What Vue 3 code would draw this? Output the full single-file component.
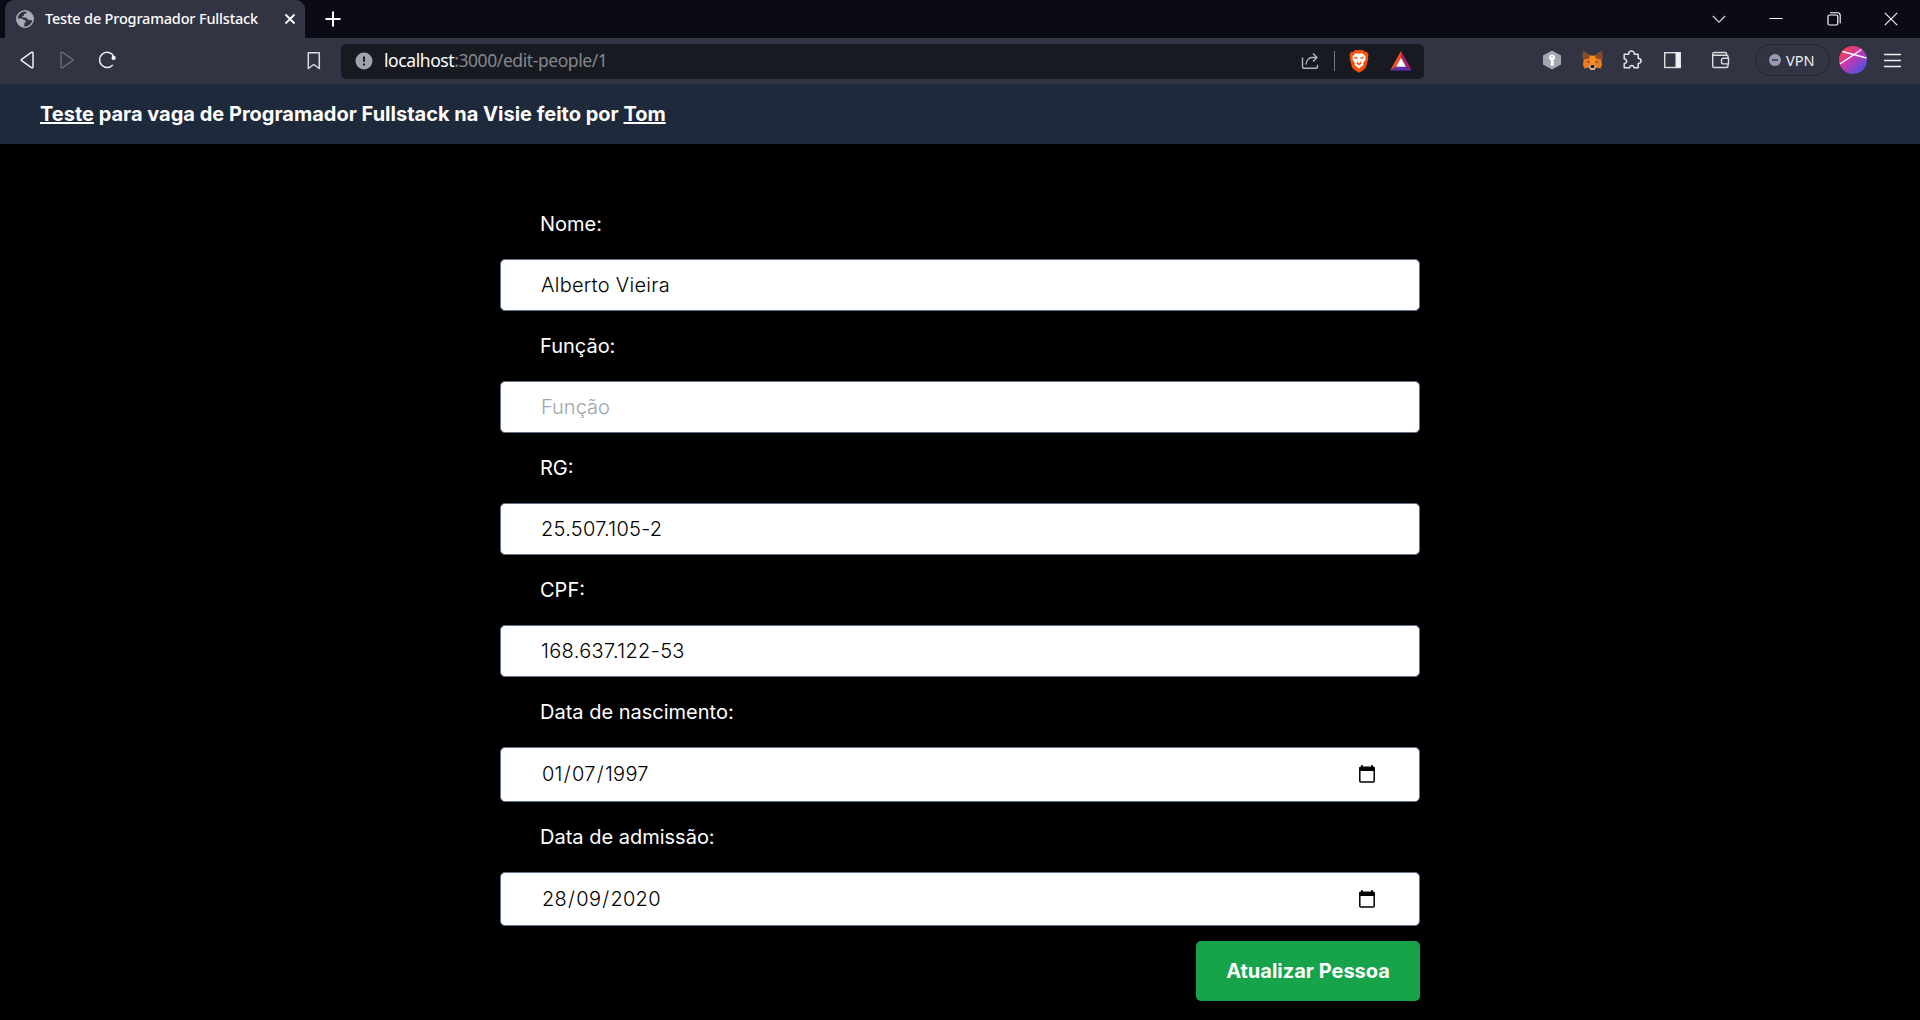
<script setup>
import { ref } from 'vue'

const fields = ref([
  { id: 'nome', label: 'Nome:', value: 'Alberto Vieira' },
  { id: 'funcao', label: 'Função:', value: '', placeholder: 'Função' },
  { id: 'rg', label: 'RG:', value: '25.507.105-2' },
  { id: 'cpf', label: 'CPF:', value: '168.637.122-53' },
  { id: 'nascimento', label: 'Data de nascimento:', date: ['01', '07', '1997'] },
  { id: 'admissao', label: 'Data de admissão:', date: ['28', '09', '2020'] },
])
</script>

<template>
  <div class="window">
    <div class="tabbar">
      <div class="tab">
        <svg class="favicon" width="18" height="18" viewBox="0 0 18 18">
          <circle cx="9" cy="9" r="8.200" fill="#323443" stroke="#a9acb6" stroke-width="1.600" />
          <path d="M1 8.500h4.500c1.200 0 1.500 1.300 2.500 1.500 1.400.2 2 .8 1.700 2-.2.900-1.500.8-1.500 1.800V17A8 8 0 0 1 1 8.500z" fill="#a9acb6" />
          <path d="M10.500 1v1.800c0 1-1.800.8-2.400 1.400-.6.500-.1 1.300-.6 1.900-.5.500-1.400.2-1.400.8 0 .7 1 .6 2 .6 1.700 0 2.500.2 3.200 1.300.6 1 1.300 1.300 2.500 1.200 1-.1 2 .2 3.200.5A8.200 8.200 0 0 0 10.500 1z" fill="#a9acb6" />
        </svg>
        <span class="tab-title">Teste de Programador Fullstack</span>
        <svg class="tab-close" width="12" height="12" viewBox="0 0 12 12"><path d="M1.500 1.500l9 9M10.500 1.500l-9 9" stroke="#fff" stroke-width="1.800" /></svg>
      </div>
      <svg class="plus" width="16" height="16" viewBox="0 0 16 16"><path d="M8 .5v15M.5 8h15" stroke="#fff" stroke-width="2" /></svg>
      <div class="controls">
        <svg width="14" height="14" viewBox="0 0 14 14"><path d="M.8 4l6.200 6.200L13.200 4" fill="none" stroke="#d6d6da" stroke-width="1.100" /></svg>
        <svg width="14" height="14" viewBox="0 0 14 14"><path d="M.5 6.500h13" stroke="#fff" /></svg>
        <svg width="14" height="14" viewBox="0 0 14 14"><rect x="1" y="3" width="9.800" height="10" rx="1.500" fill="none" stroke="#fff" stroke-width="1.200" /><path d="M3 .8h7.500q2.700 0 2.700 2.700v7.800" fill="none" stroke="#fff" stroke-width="1.100" /></svg>
        <svg width="14" height="14" viewBox="0 0 14 14"><path d="M.8.8l12.400 12.400M13.200.8L.8 13.200" stroke="#f0f0f2" stroke-width="1.200" /></svg>
      </div>
    </div>

    <div class="toolbar">
      <div class="nav">
        <svg class="ico" viewBox="0 0 24 24"><path d="M16.300 4.500Q18 3.500 18 5.500v13q0 2-1.700 1L6.700 12.700q-1-.7 0-1.400z" fill="none" stroke="#eeeef0" stroke-width="1.500" /></svg>
        <svg class="ico" viewBox="0 0 24 24"><path d="M7.700 4.500Q6 3.500 6 5.500v13q0 2 1.700 1l9.900-6.800q1-.7 0-1.400z" fill="none" stroke="#676976" stroke-width="1.500" /></svg>
        <svg class="ico" viewBox="0 0 24 24"><path d="M18.600 7.800A7.600 7.600 0 1 0 17.800 17" fill="none" stroke="#eeeef0" stroke-width="1.500" /><circle cx="18.600" cy="9.900" r="2.100" fill="#fff" /></svg>
      </div>
      <svg class="ico bookmark" viewBox="0 0 24 24"><path d="M6.300 3.800h11v15.700l-5.500-4-5.500 4z" fill="none" stroke="#dcdce0" stroke-width="1.500" stroke-linejoin="round" /></svg>

      <div class="urlbar">
        <svg width="18" height="18" viewBox="0 0 18 18"><circle cx="9" cy="9" r="8.500" fill="#a0a3ad" /><path d="M9 4.500v5.200M9 11.500v2" stroke="#171a21" stroke-width="2" /></svg>
        <span class="url"><b>localhost</b>:3000/edit-people/1</span>
        <svg class="share" width="18" height="18" viewBox="0 0 18 18"><path d="M1.500 5.500v9.200q0 1.500 1.500 1.500h12q1.500 0 1.500-1.500v-2" fill="none" stroke="#b4b5ba" stroke-width="1.400" /><path d="M5 12.500c.2-4.300 3-7 6-7h4.500M12 1.500l4 4-4 4" fill="none" stroke="#b4b5ba" stroke-width="1.400" /></svg>
        <i class="divider"></i>
        <svg class="lion" width="20" height="24" viewBox="0 0 20 24">
          <path d="M6 1h8l2 2 1.800-.2L19.600 5.500l-.7 2 .5 2-2.600 9.300L14.500 21 10 23.700 5.500 21l-2.300-2.200L.6 9.500l.5-2-.7-2L2.200 2.800 4 3z" fill="#fb4f0c" />
          <path d="M10 4.800l3.400-.5 3.200 3-.5 2 .6 1-2.600 3.600.3 2.200L10 19.600 5.600 16.100l.3-2.200-2.600-3.600.6-1-.5-2 3.200-3z" fill="#fff" />
          <path d="M4.800 7.600l3.800.9-.6 2.300 1.300 3.100L10 14.300l.7-.4 1.300-3.100-.6-2.300 3.800-.9-1.200 2-2 .5-.4 3 1 1.600-2.600 1.500-2.600-1.500 1-1.600-.4-3-2-.5z" fill="#fb4f0c" />
        </svg>
        <svg class="bat" width="24" height="20" viewBox="0 0 24 20"><path d="M12 0L1 19.500 7.300 15.500 12 7z" fill="#ff4b18" /><path d="M12 0l11 19.500-6.300-4L12 7z" fill="#a3206b" /><path d="M1 19.500h22l-6.300-4H7.300z" fill="#6330a8" /><path d="M12 6.800l5 8.900H7z" fill="#fff" /></svg>
      </div>

      <div class="extensions">
        <svg class="ico" viewBox="0 0 24 24"><path d="M12 2.500l9 4.900v9.200L12 21.500l-9-4.900V7.400z" fill="#a2a7b0" /><circle cx="12" cy="9.500" r="3" fill="#fff" /><path d="M11.800 10v7.800M12 14h2M12 16.500h2" stroke="#fff" stroke-width="1.900" /><circle cx="12" cy="8.800" r=".8" fill="#a2a7b0" /></svg>
        <svg class="ico" viewBox="0 0 24 24">
          <path d="M3 3l7 4.500h5L22 3l.3 6-1 3.500.9 4-1.700 4-4.500-1-1.500 2.300h-4L9 19.500l-4.500 1-1.700-4 .9-4-1-3.500z" fill="#e97a20" />
          <path d="M3 3l7 4.500-1.200 3L3.600 11.500 2.800 8.500zM22 3l-7 4.500 1.200 3 5.200 1 .8-3z" fill="#8b4a24" />
          <path d="M10 8h5l.6 9h-6.200z" fill="#f58b25" />
          <path d="M6.500 13.200l3.500.5-1 1.400zM18.500 13.200l-3.500.5 1 1.400z" fill="#3e3436" />
          <path d="M9 18.300l1.500-1h4l1.500 1-1.200 3.400h-4.600z" fill="#d2c0b3" /><path d="M10.500 18l.8-1h2.400l.8 1-.4 2h-3.200z" fill="#202026" />
        </svg>
        <svg class="ico" viewBox="0 0 24 24"><path d="M4.200 6.200h4.500c.3-.5-.2-1.700.5-2.300 1.200-1.200 3.700-1.200 4.700.2.400.7.100 1.500.4 2.100h3.900v4.100c.5.400 1.500 0 2.100.7 1 1.300.9 3-.2 4-.6.500-1.300.2-1.900.6v4.200h-4c-.5-.4-.1-1.200-.9-1.700-1-.7-2.300-.6-3.100.2-.5.500-.3 1.200-.7 1.500H4.200v-4.300c.5-.4 1.500 0 2-.8.600-1 .5-2.500-.3-3.200-.5-.5-1.200-.3-1.700-.7z" fill="none" stroke="#e4e4e8" stroke-width="1.500" stroke-linejoin="round" /></svg>
        <svg class="ico" viewBox="0 0 24 24"><rect x="4.700" y="4.700" width="15.600" height="14.800" fill="none" stroke="#dedee2" stroke-width="1.400" /><path d="M15.500 4.500h4.800v15h-4.800z" fill="#f0f0f2" /></svg>
        <svg class="ico wallet" viewBox="0 0 24 24"><path d="M18.500 7V5.500q0-1-1-1H6.500Q4.700 4.500 4.700 6v12q0 1.500 1.500 1.500h12.300q1.500 0 1.500-1.500v-2M20 10V8.500q0-1.300-1.300-1.300H5M20.500 10.300h-5q-2 0-2 2v1.600q0 2 2 2h5z" fill="none" stroke="#dcdce0" stroke-width="1.400" /></svg>
        <span class="vpn"><svg width="12" height="12" viewBox="0 0 12 12"><circle cx="6" cy="6" r="6" fill="#999bb3" /><path d="M3 6h6" stroke="#323443" stroke-width="1.500" /></svg><span>VPN</span></span>
        <svg class="avatar" width="28" height="28" viewBox="0 0 28 28">
          <defs><linearGradient id="avatar-fill" x1=".15" y1=".1" x2=".85" y2=".9"><stop offset="0" stop-color="#f6414c" /><stop offset=".45" stop-color="#c238b4" /><stop offset="1" stop-color="#4a52e0" /></linearGradient></defs>
          <circle cx="14" cy="14" r="14" fill="url(#avatar-fill)" /><path d="M3.500 5.500L27.500 12M1 18L22.500 3.500" stroke="#fff" stroke-width="1.300" />
        </svg>
        <svg class="ico menu" viewBox="0 0 24 24"><path d="M4 6.500h17M4 12.500h17M4 18.500h17" stroke="#eeeef0" stroke-width="1.500" /></svg>
      </div>
    </div>

    <header class="header">
      <h1><a>Teste</a> para vaga de Programador Fullstack na Visie feito por <a>Tom</a></h1>
    </header>

    <main class="page">
      <form class="form" @submit.prevent>
        <template v-for="f in fields" :key="f.id">
          <label :for="f.id">{{ f.label }}</label>
          <div v-if="f.date" :id="f.id" class="control date" :class="f.id">
            <div class="date-value">
              <template v-for="(part, i) in f.date" :key="i"><i v-if="i">/</i><span>{{ part }}</span></template>
            </div>
            <svg width="16" height="18" viewBox="0 0 16 18"><path d="M3 0v3M13 0v3" stroke="#000" stroke-width="1.600" /><rect x=".8" y="2.300" width="14.400" height="14.700" rx="1" fill="none" stroke="#000" stroke-width="1.500" /><path d="M.5 2h15v4H.5z" /></svg>
          </div>
          <div v-else class="control" :class="f.id">
            <input :id="f.id" v-model="f.value" type="text" :placeholder="f.placeholder" />
          </div>
        </template>
        <button type="submit">Atualizar Pessoa</button>
      </form>
    </main>
  </div>
</template>

<style>
body {
  margin: 0;
  background: #000;
}
</style>

<style scoped>
* {
  box-sizing: border-box;
}
svg {
  display: block;
  flex: none;
}
.window {
  width: 1920px;
  height: 1020px;
  overflow: hidden;
  background: #000;
  color: #fff;
  font-family: Inter, sans-serif;
}
.tabbar {
  display: flex;
  align-items: center;
  height: 38px;
  padding-left: 5px;
  background: #0b0b15;
  font-family: "Noto Sans", sans-serif;
}
.tab {
  display: flex;
  align-items: center;
  width: 300px;
  height: 38px;
  padding: 0 9px 0 11px;
  border-radius: 9px 9px 0 0;
  background: #323443;
}
.tab-title {
  margin: 0 auto 0 11px;
  padding-bottom: 2px;
  font-size: 14.500px;
  font-weight: 500;
  white-space: nowrap;
  letter-spacing: -0.180px;
}
.plus {
  margin-left: 19.500px;
}
.controls {
  display: flex;
  gap: 43.300px;
  margin: 0 22px 0 auto;
}
.toolbar {
  display: flex;
  align-items: center;
  height: 46px;
  padding: 0 16px 0 15px;
  background: #323443;
  font-family: "Noto Sans", sans-serif;
}
.ico {
  width: 24px;
  height: 24px;
}
.nav {
  display: flex;
  gap: 16px;
  padding-bottom: 2px;
}
.bookmark {
  margin-left: 183px;
}
.urlbar {
  display: flex;
  align-items: center;
  width: 1083px;
  height: 35px;
  margin-left: 15px;
  padding: 0 11px 0 14px;
  border-radius: 5px;
  background: #171a21;
}
.url {
  margin-left: 11px;
  padding-bottom: 2px;
  color: #85878c;
  font-size: 17.500px;
  letter-spacing: -0.420px;
  white-space: nowrap;
}
.url b {
  color: #fff;
  font-weight: 400;
}
.share {
  margin-left: auto;
}
.divider {
  width: 1px;
  height: 20px;
  margin: 0 14px 0 15px;
  background: #777980;
}
.lion {
  margin-right: 20px;
}
.extensions {
  display: flex;
  align-items: center;
  gap: 16px;
  margin-left: auto;
  padding-bottom: 2px;
}
.wallet {
  margin-left: 8px;
}
.vpn {
  display: flex;
  align-items: center;
  gap: 5px;
  width: 75px;
  height: 32px;
  margin: 0 -7px 0 7px;
  padding-left: 13px;
  border: 1px solid #242633;
  border-radius: 16px;
  color: #eeeef1;
  font-size: 14.500px;
}
.vpn span {
  padding-bottom: 1px;
}
.menu {
  margin-left: -3px;
}
.header {
  display: flex;
  align-items: center;
  height: 60px;
  padding: 0 40px;
  background: #1e293b;
}
h1 {
  margin: 0;
  font-size: 20px;
  font-weight: 700;
  line-height: 30px;
}
h1 a {
  text-decoration: underline;
}
.page {
  padding-top: 45px;
}
.form {
  display: flex;
  flex-direction: column;
  width: 920px;
  margin: 0 auto;
}
label {
  margin: 20px 40px;
  font-size: 20px;
  line-height: 30px;
}
.control {
  display: flex;
  align-items: center;
  height: 52px;
  padding: 0 44px 0 40px;
  border: 1px solid #64748b;
  border-radius: 5px;
  background: #fff;
}
.control.date {
  justify-content: space-between;
  height: 54px;
}
.control.nascimento {
  height: 55px;
  padding-bottom: 2px;
}
input,
.date-value {
  height: 30px;
  color: #000;
  font: 300 20px/30px Inter, sans-serif;
  letter-spacing: 0.270px;
}
input {
  flex: 1;
  min-width: 0;
  padding: 0;
  border: 0;
  outline: 0;
  background: transparent;
}
.cpf input {
  letter-spacing: 0.340px;
}
.date-value {
  display: flex;
}
.date-value span {
  padding: 0 1px;
}
.date-value i {
  font-style: normal;
}
input::placeholder {
  color: #9ca3af;
  letter-spacing: 0;
  opacity: 1;
}
button {
  align-self: flex-end;
  width: 224px;
  height: 60px;
  margin-top: 15px;
  border: 0;
  border-radius: 5px;
  background: #16a34a;
  color: #fff;
  font: 700 20px/30px Inter, sans-serif;
}
</style>
